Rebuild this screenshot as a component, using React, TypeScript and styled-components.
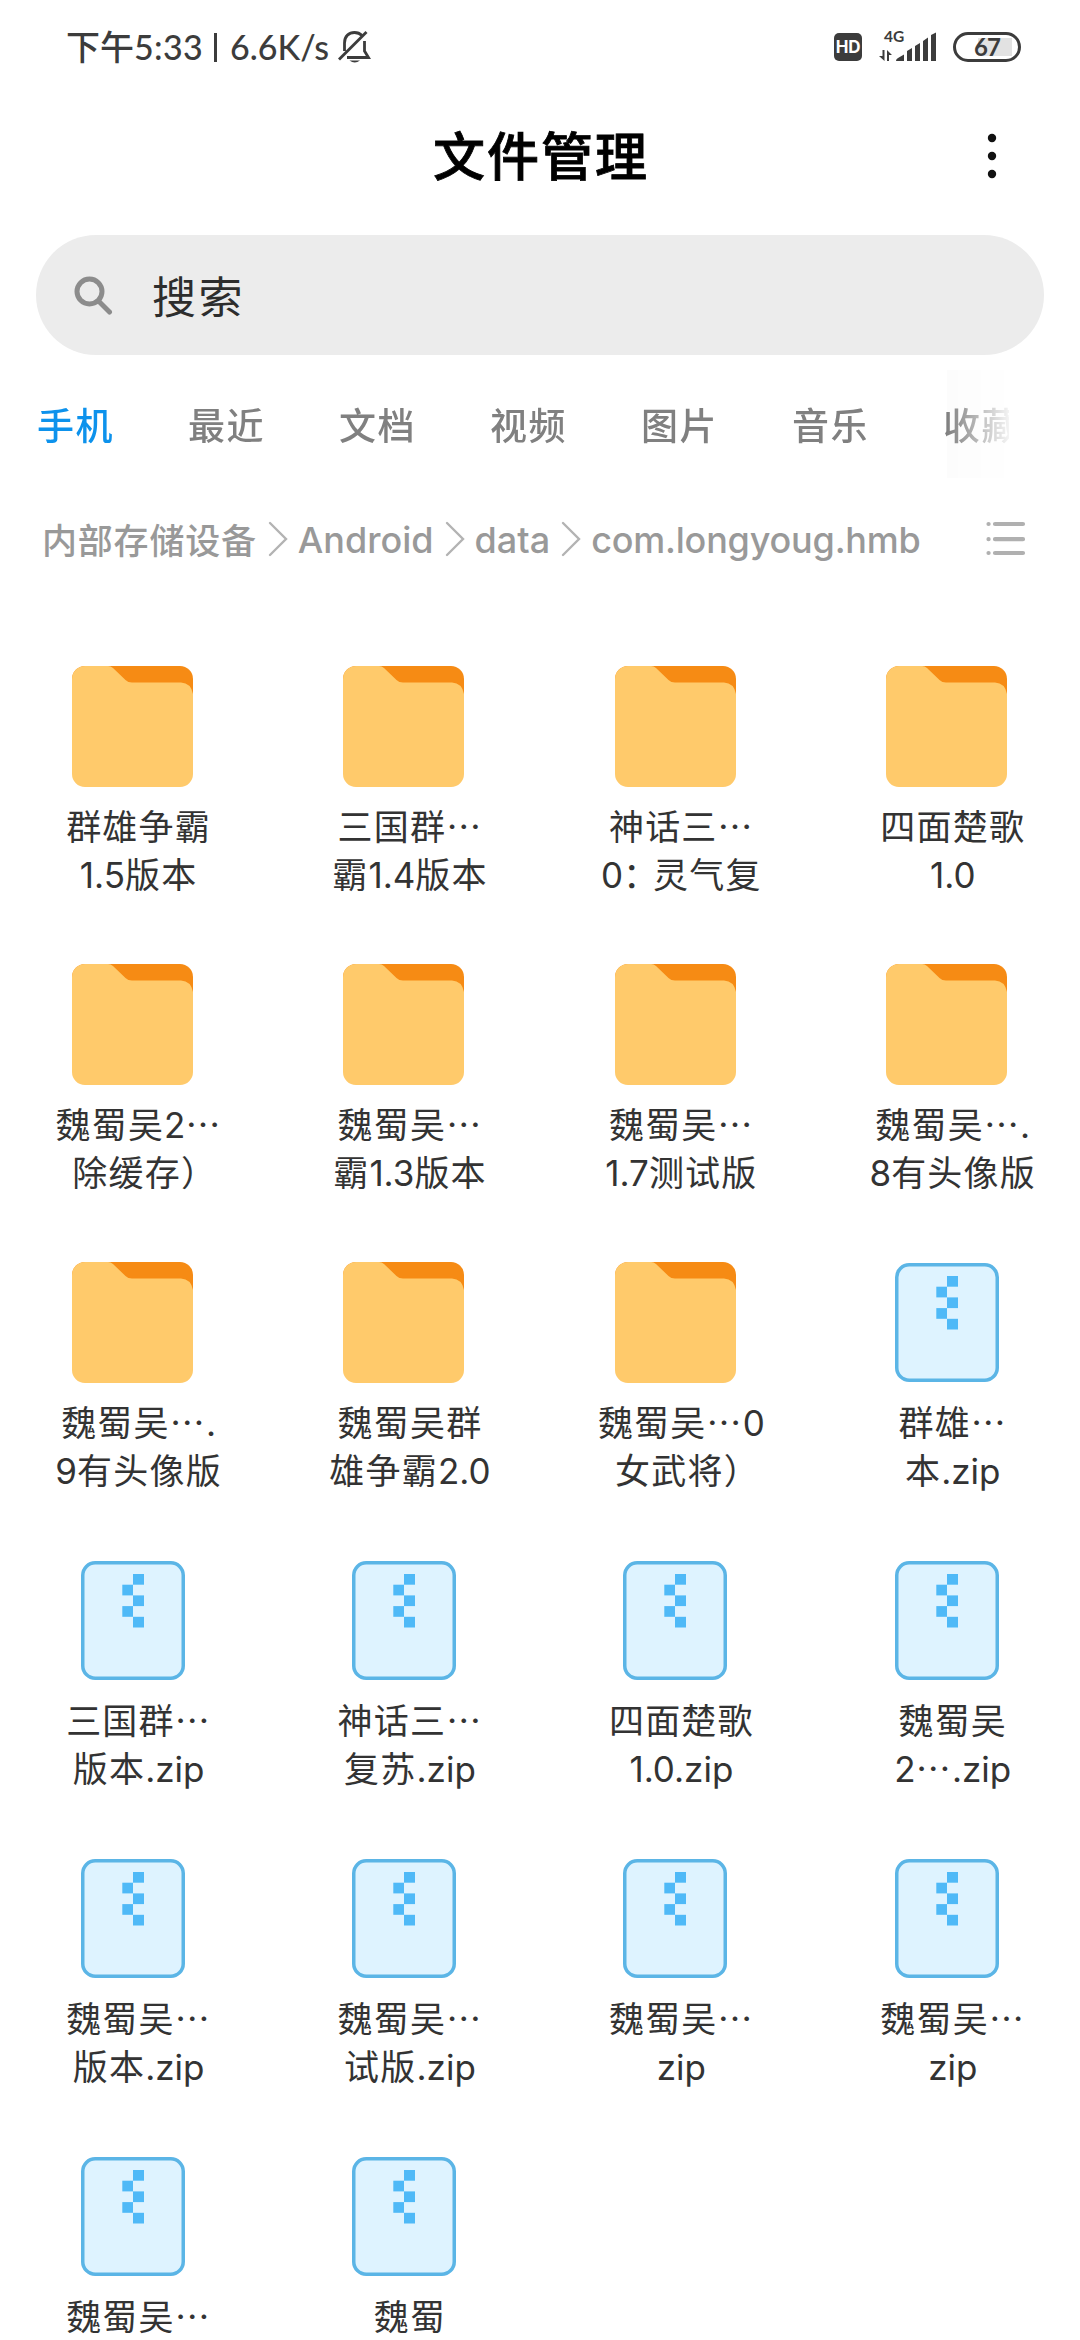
import React from "react";
import styled, { createGlobalStyle } from "styled-components";

const CJK = '"Noto Sans CJK SC", sans-serif';
const LATIN = 'Inter, "Noto Sans CJK SC", sans-serif';
const ROUND = 'Lato, "Noto Sans CJK SC", sans-serif';

const GlobalStyle = createGlobalStyle`
  * { box-sizing: border-box; }
  body { margin: 0; background: #fff; font-family: ${CJK}; }
`;

const Screen = styled.div`
  display: flex;
  flex-direction: column;
  width: 1080px;
  height: 2340px;
  overflow: hidden;
  background: #fff;

  > * { flex-shrink: 0; }
`;

const StatusBar = styled.header`
  display: flex;
  align-items: center;
  justify-content: space-between;
  height: 94px;
  padding: 0 59px 0 66px;
  color: #3c3c3c;
`;

const StatusGroup = styled.div`
  display: flex;
  align-items: center;
`;

const StatusText = styled.span<{ $spacing?: number }>`
  font: 500 34px/40px ${ROUND};
  letter-spacing: ${(p) => p.$spacing ?? 0}px;
  white-space: nowrap;
`;

const StatusDivider = styled.span`
  width: 3px;
  height: 29px;
  margin: 0 13px 0 11px;
  background: #3c3c3c;
`;

const HdBadge = styled.span`
  display: flex;
  align-items: center;
  justify-content: center;
  width: 28px;
  height: 28px;
  border-radius: 5px;
  background: #3c3c3c;
  color: #fff;
  font: 700 17px/28px ${LATIN};
  letter-spacing: -0.3px;
`;

const Signal = styled.svg`
  margin: 0 16px 0 17px;
  overflow: visible;
`;

const Battery = styled.div`
  display: flex;
  align-items: center;
  justify-content: center;
  width: 68px;
  height: 30px;
  border: 3px solid #3c3c3c;
  border-radius: 15px;
  background: linear-gradient(#e2e2e2, #e2e2e2) 22px 3px / 34px 18px no-repeat;
  font: 700 24px/24px ${ROUND};
  letter-spacing: -1px;
`;

const TitleBar = styled.div`
  display: grid;
  grid-template-columns: 1fr auto 1fr;
  align-items: center;
  height: 141px;
  padding-bottom: 17px;
`;

const Title = styled.h1`
  grid-column: 2;
  margin: 0;
  padding: 0 0 4px 2px;
  font: 500 52px/76px ${CJK};
  letter-spacing: 2px;
  color: #000;
  -webkit-text-stroke: 0.8px #000;
`;

const MenuButton = styled.button`
  display: flex;
  justify-self: end;
  margin: 0 78px 0 0;
  padding: 0;
  border: 0;
  background: none;
`;

const SearchBox = styled.div`
  display: flex;
  align-items: center;
  gap: 38px;
  height: 120px;
  margin: 0 36px;
  padding-left: 38px;
  border-radius: 60px;
  background: #ececec;
  color: #2d2d2d;
  font: 400 44px/60px ${CJK};
  letter-spacing: 2.5px;
`;

const Tabs = styled.nav`
  display: flex;
  gap: 74px;
  width: 972px;
  height: 118px;
  margin: 10px 0 6px 37px;
  overflow: hidden;
  align-items: center;
  background: linear-gradient(#fcfcfc, #fcfcfc) right 5px / 62px 108px no-repeat;
  mask-image: linear-gradient(to right, #000 910px, transparent 978px);
`;

const Tab = styled.span<{ $active?: boolean }>`
  flex: none;
  width: 77px;
  font: 500 37px/56px ${CJK};
  letter-spacing: 1.6px;
  white-space: nowrap;
  color: ${(p) => (p.$active ? "#0d92ec" : "#808080")};
`;

const PathBar = styled.div`
  display: flex;
  align-items: center;
  justify-content: space-between;
  height: 100px;
  margin-bottom: 77px;
  padding: 0 54px 0 42px;
`;

const Crumbs = styled.div`
  display: flex;
  align-items: center;
  width: 879px;
  overflow: hidden;
`;

const Crumb = styled.span<{ $latin?: boolean; $spacing?: number }>`
  flex: none;
  padding: ${(p) => (p.$latin ? "2px 0 0" : "0 0 1px")};
  font: 500 ${(p) => (p.$latin ? 36 : 35)}px/50px ${(p) => (p.$latin ? LATIN : CJK)};
  letter-spacing: ${(p) => p.$spacing ?? 0}px;
  white-space: nowrap;
  color: #999;
`;

const Grid = styled.main`
  display: grid;
  grid-template-columns: repeat(4, 271.4px);
  grid-auto-rows: 233px;
  row-gap: 65px;
  padding-left: 1.4px;
`;

const Cell = styled.div`
  display: flex;
  flex-direction: column;
  align-items: center;
`;

const IconSlot = styled.div`
  display: flex;
  align-items: center;
  justify-content: center;
  width: 121px;
  height: 121px;
  margin: 0 9px 14px 0;
`;

const Line = styled.div`
  height: 48px;
  padding-left: 3px;
  font: 400 35px/48px ${CJK};
  letter-spacing: 1.2px;
  white-space: nowrap;
  color: #333;
`;

const Latin = styled.span`
  font: 400 35px/1 ${LATIN};
  letter-spacing: 0;
`;

const Punct = styled.span<{ $trim: number }>`
  letter-spacing: ${(p) => -p.$trim}px;
`;

const FolderIcon = () => (
  <svg width="121" height="121" viewBox="0 0 121 121">
    <rect width="121" height="60" rx="13" fill="#f68b14" />
    <path
      d="M13 0H36Q39 0 41 2L53.500 14Q56 16.500 60 16.500H109Q119 17 121 28V108A13 13 0 0 1 108 121H13A13 13 0 0 1 0 108V13A13 13 0 0 1 13 0Z"
      fill="#ffca6b"
    />
  </svg>
);

const ZipIcon = () => (
  <svg width="104" height="119" viewBox="0 0 104 119">
    <rect x="1.750" y="1.750" width="100.500" height="115.500" rx="12.500" fill="#def3ff" stroke="#5bb5e6" strokeWidth="3.500" />
    <g fill="#4fb9f7">
      <rect x="52" y="13" width="11" height="10.700" />
      <rect x="41.300" y="23.700" width="10.700" height="10.700" />
      <rect x="52" y="34.400" width="11" height="10.700" />
      <rect x="41.300" y="45.100" width="10.700" height="10.700" />
      <rect x="52" y="55.800" width="11" height="10.700" />
    </g>
  </svg>
);

const ChevronIcon = styled.svg`
  flex: none;
  margin: 0 10px 0 11px;
`;

const Chevron = () => (
  <ChevronIcon width="20" height="36" viewBox="0 0 20 36">
    <path d="M2 2L18 18L2 34" fill="none" stroke="#b3b3b3" strokeWidth="2.400" strokeLinecap="round" />
  </ChevronIcon>
);

const BellOff = styled.svg`
  margin-left: 9px;
`;

type Item = { kind: "folder" | "zip"; lines: string[] };
const folder = (...lines: string[]): Item => ({ kind: "folder", lines });
const zip = (...lines: string[]): Item => ({ kind: "zip", lines });

const items: Item[] = [
  folder("群雄争霸", "1.5版本"),
  folder("三国群…", "霸1.4版本"),
  folder("神话三…", "0：灵气复"),
  folder("四面楚歌", "1.0"),
  folder("魏蜀吴2…", "除缓存）"),
  folder("魏蜀吴…", "霸1.3版本"),
  folder("魏蜀吴…", "1.7测试版"),
  folder("魏蜀吴….", "8有头像版"),
  folder("魏蜀吴….", "9有头像版"),
  folder("魏蜀吴群", "雄争霸2.0"),
  folder("魏蜀吴…0", "女武将）"),
  zip("群雄…", "本.zip"),
  zip("三国群…", "版本.zip"),
  zip("神话三…", "复苏.zip"),
  zip("四面楚歌", "1.0.zip"),
  zip("魏蜀吴", "2….zip"),
  zip("魏蜀吴…", "版本.zip"),
  zip("魏蜀吴…", "试版.zip"),
  zip("魏蜀吴…", "zip"),
  zip("魏蜀吴…", "zip"),
  zip("魏蜀吴…"),
  zip("魏蜀"),
];

const tabs = ["手机", "最近", "文档", "视频", "图片", "音乐", "收藏"];

const renderRun = (run: string, i: number) => {
  if (/^[0-9a-z.]/.test(run)) return <Latin key={i}>{run}</Latin>;
  if (run === "：") return <Punct key={i} $trim={5}>{run}</Punct>;
  if (run === "）") return <Punct key={i} $trim={11}>{run}</Punct>;
  return run;
};

const MixedLine = ({ text }: { text: string }) => (
  <Line>{text.split(/([0-9a-z.]+|[：）])/).filter(Boolean).map(renderRun)}</Line>
);

export default function App() {
  return (
    <Screen lang="zh-CN">
      <GlobalStyle />
      <StatusBar>
        <StatusGroup>
          <StatusText>下午</StatusText>
          <StatusText $spacing={0.3}>5:33</StatusText>
          <StatusDivider />
          <StatusText>6.6K/s</StatusText>
          <BellOff width="33" height="34" viewBox="0 0 33 34" fill="none" stroke="#3c3c3c" strokeWidth="2.800">
            <path d="M6.500 21V13C6.500 6 11 2.500 16.500 2.500C19.500 2.500 22 3.500 24 5.500" />
            <path d="M26.500 11V21L30.500 27.500H9" />
            <path d="M1 29.500L28.500 2" />
            <path d="M11.500 30.500H22Q16.800 34.500 11.500 30.500Z" fill="#3c3c3c" stroke="none" />
          </BellOff>
        </StatusGroup>
        <StatusGroup>
          <HdBadge>HD</HdBadge>
          <Signal width="58" height="32" viewBox="0 0 58 32" fill="#3c3c3c">
            <text x="5" y="11" fontFamily="Lato" fontWeight="700" fontSize="15.500">4G</text>
            <path d="M3.500 19H5.500V30L0 25H3.500ZM8 30V19L13 24H10V30Z" />
            <path d="M17 30Q17 28 19 27L25 23.500V30ZM28 30V20L33 17V30ZM36 30V15L41 12V30ZM44 30V10L49 6.500V30ZM52 30V4L57 1.500V30Z" />
          </Signal>
          <Battery>67</Battery>
        </StatusGroup>
      </StatusBar>

      <TitleBar>
        <Title>文件管理</Title>
        <MenuButton aria-label="menu">
          <svg width="20" height="48" viewBox="0 0 20 48" fill="#111">
            <circle cx="10" cy="6" r="4.200" />
            <circle cx="10" cy="24" r="4.200" />
            <circle cx="10" cy="42" r="4.200" />
          </svg>
        </MenuButton>
      </TitleBar>

      <SearchBox>
        <svg width="40" height="40" viewBox="0 0 40 40" fill="none" stroke="#8c8c8c" strokeWidth="5" strokeLinecap="round">
          <circle cx="15.500" cy="16.500" r="12.500" />
          <path d="M25 26.500L35.500 37" />
        </svg>
        <span>搜索</span>
      </SearchBox>

      <Tabs>
        {tabs.map((t, i) => (
          <Tab key={t} $active={i === 0}>{t}</Tab>
        ))}
      </Tabs>

      <PathBar>
        <Crumbs>
          <Crumb $spacing={0.8}>内部存储设备</Crumb>
          <Chevron />
          <Crumb $latin>Android</Crumb>
          <Chevron />
          <Crumb $latin>data</Crumb>
          <Chevron />
          <Crumb $latin $spacing={-0.2}>com.longyoug.hmb</Crumb>
        </Crumbs>
        <svg width="40" height="36" viewBox="0 0 40 36" fill="none" stroke="#b0b0b0" strokeWidth="4.200" strokeLinecap="round">
          <path d="M2.500 3H2.600M9 3H37M2.500 18.200H2.600M9 18.200H37M2.500 32H2.600M9 32H37" />
        </svg>
      </PathBar>

      <Grid>
        {items.map((item, i) => (
          <Cell key={i}>
            <IconSlot>{item.kind === "folder" ? <FolderIcon /> : <ZipIcon />}</IconSlot>
            {item.lines.map((line) => (
              <MixedLine key={line} text={line} />
            ))}
          </Cell>
        ))}
      </Grid>
    </Screen>
  );
}
